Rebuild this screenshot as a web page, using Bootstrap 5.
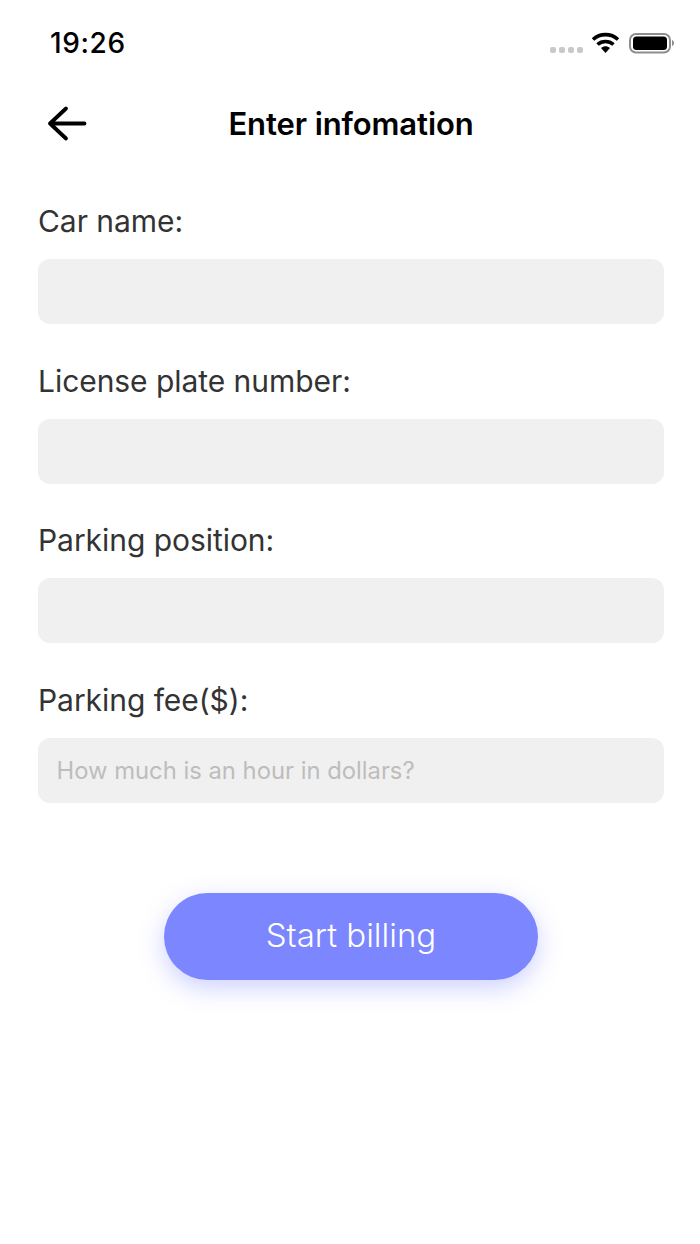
<!DOCTYPE html>
<html lang="en">
<head>
<meta charset="utf-8">
<title>Enter infomation</title>
<link href="https://cdn.jsdelivr.net/npm/bootstrap@5.3.0/dist/css/bootstrap.min.css" rel="stylesheet">
<style>
body { background:#fff; font-family:Inter,"Noto Sans",sans-serif; width:700px; height:1244px; overflow:hidden; }
.status-row { height:86px; padding:27px 24px 0 50px; }
.clock { font-size:28px; font-weight:500; line-height:32px; color:#000; letter-spacing:.6px; }
.title-row { height:76px; padding:0 36px 0 38px; position:relative; }
.back-link { position:absolute; left:47px; top:18px; line-height:0; }
.page-title { font-size:31px; font-weight:600; line-height:40px; color:#000; margin:0; letter-spacing:-.1px; }
.entry-form { padding:39px 36px 0 38px; }
.field-label { display:block; font-size:30px; line-height:40px; color:#333; margin:0 0 18px; letter-spacing:-.05px; }
.field-input { display:block; width:100%; height:65px; background:#f0f0f0; border:0; border-radius:12px; padding:0 18.500px; font-size:23.8px; outline:0; margin-bottom:36.5px; }
.field-input::placeholder { color:#bdbdbd; opacity:1; }
.bill-btn { width:374px; height:87px; margin-top:53.500px; border:0; border-radius:44px; background:#7c86ff; color:#fff; font-size:33px; font-weight:300; box-shadow:0 8px 24px rgba(124,134,255,.38); }
.bill-btn:hover { background:#7c86ff; color:#fff; }
</style>
</head>
<body>
<div class="status-row d-flex justify-content-between align-items-start">
  <span class="clock">19:26</span>
  <svg width="126" height="34" viewBox="0 0 126 34" aria-hidden="true">
    <g fill="#c9c9c9"><rect x="0" y="20" width="6" height="6" rx="2"/><rect x="9" y="20" width="6" height="6" rx="2"/><rect x="18" y="20" width="6" height="6" rx="2"/><rect x="27" y="20" width="6" height="6" rx="2"/></g>
    <path d="M43 12.500C50 6 61 6 68 12.500" fill="none" stroke="#000" stroke-width="3.600"/>
    <path d="M47.500 17.500C52 13.500 59 13.500 63.500 17.500" fill="none" stroke="#000" stroke-width="3.600"/>
    <path d="M51 21C54 18.500 57 18.500 60 21L55.500 26Z" fill="#000"/>
    <rect x="80" y="7" width="40" height="18.500" rx="6" fill="none" stroke="#8e8e8e" stroke-width="2"/>
    <rect x="83" y="9.500" width="34" height="13.500" rx="3.500" fill="#000"/>
    <path d="M122 13c1.500.5 2 1.500 2 3s-.5 2.500-2 3z" fill="#8e8e8e"/>
  </svg>
</div>
<div class="title-row d-flex align-items-center justify-content-center">
  <a class="back-link" href="#" aria-label="Back">
    <svg width="40" height="40" viewBox="0 0 40 40"><path d="M19 4.500 3 19.500 19 34.500M3 19.500H37.500" fill="none" stroke="#000" stroke-width="3.800" stroke-linecap="round" stroke-linejoin="round"/></svg>
  </a>
  <h1 class="page-title">Enter infomation</h1>
</div>
<form class="entry-form">
  <label class="field-label">Car name:</label>
  <input class="field-input" type="text">
  <label class="field-label">License plate number:</label>
  <input class="field-input" type="text">
  <label class="field-label">Parking position:</label>
  <input class="field-input" type="text">
  <label class="field-label">Parking fee($):</label>
  <input class="field-input" type="text" placeholder="How much is an hour in dollars?">
  <div class="d-flex justify-content-center">
    <button type="button" class="btn bill-btn">Start billing</button>
  </div>
</form>
<script src="https://cdn.jsdelivr.net/npm/bootstrap@5.3.0/dist/js/bootstrap.bundle.min.js"></script>
</body>
</html>
